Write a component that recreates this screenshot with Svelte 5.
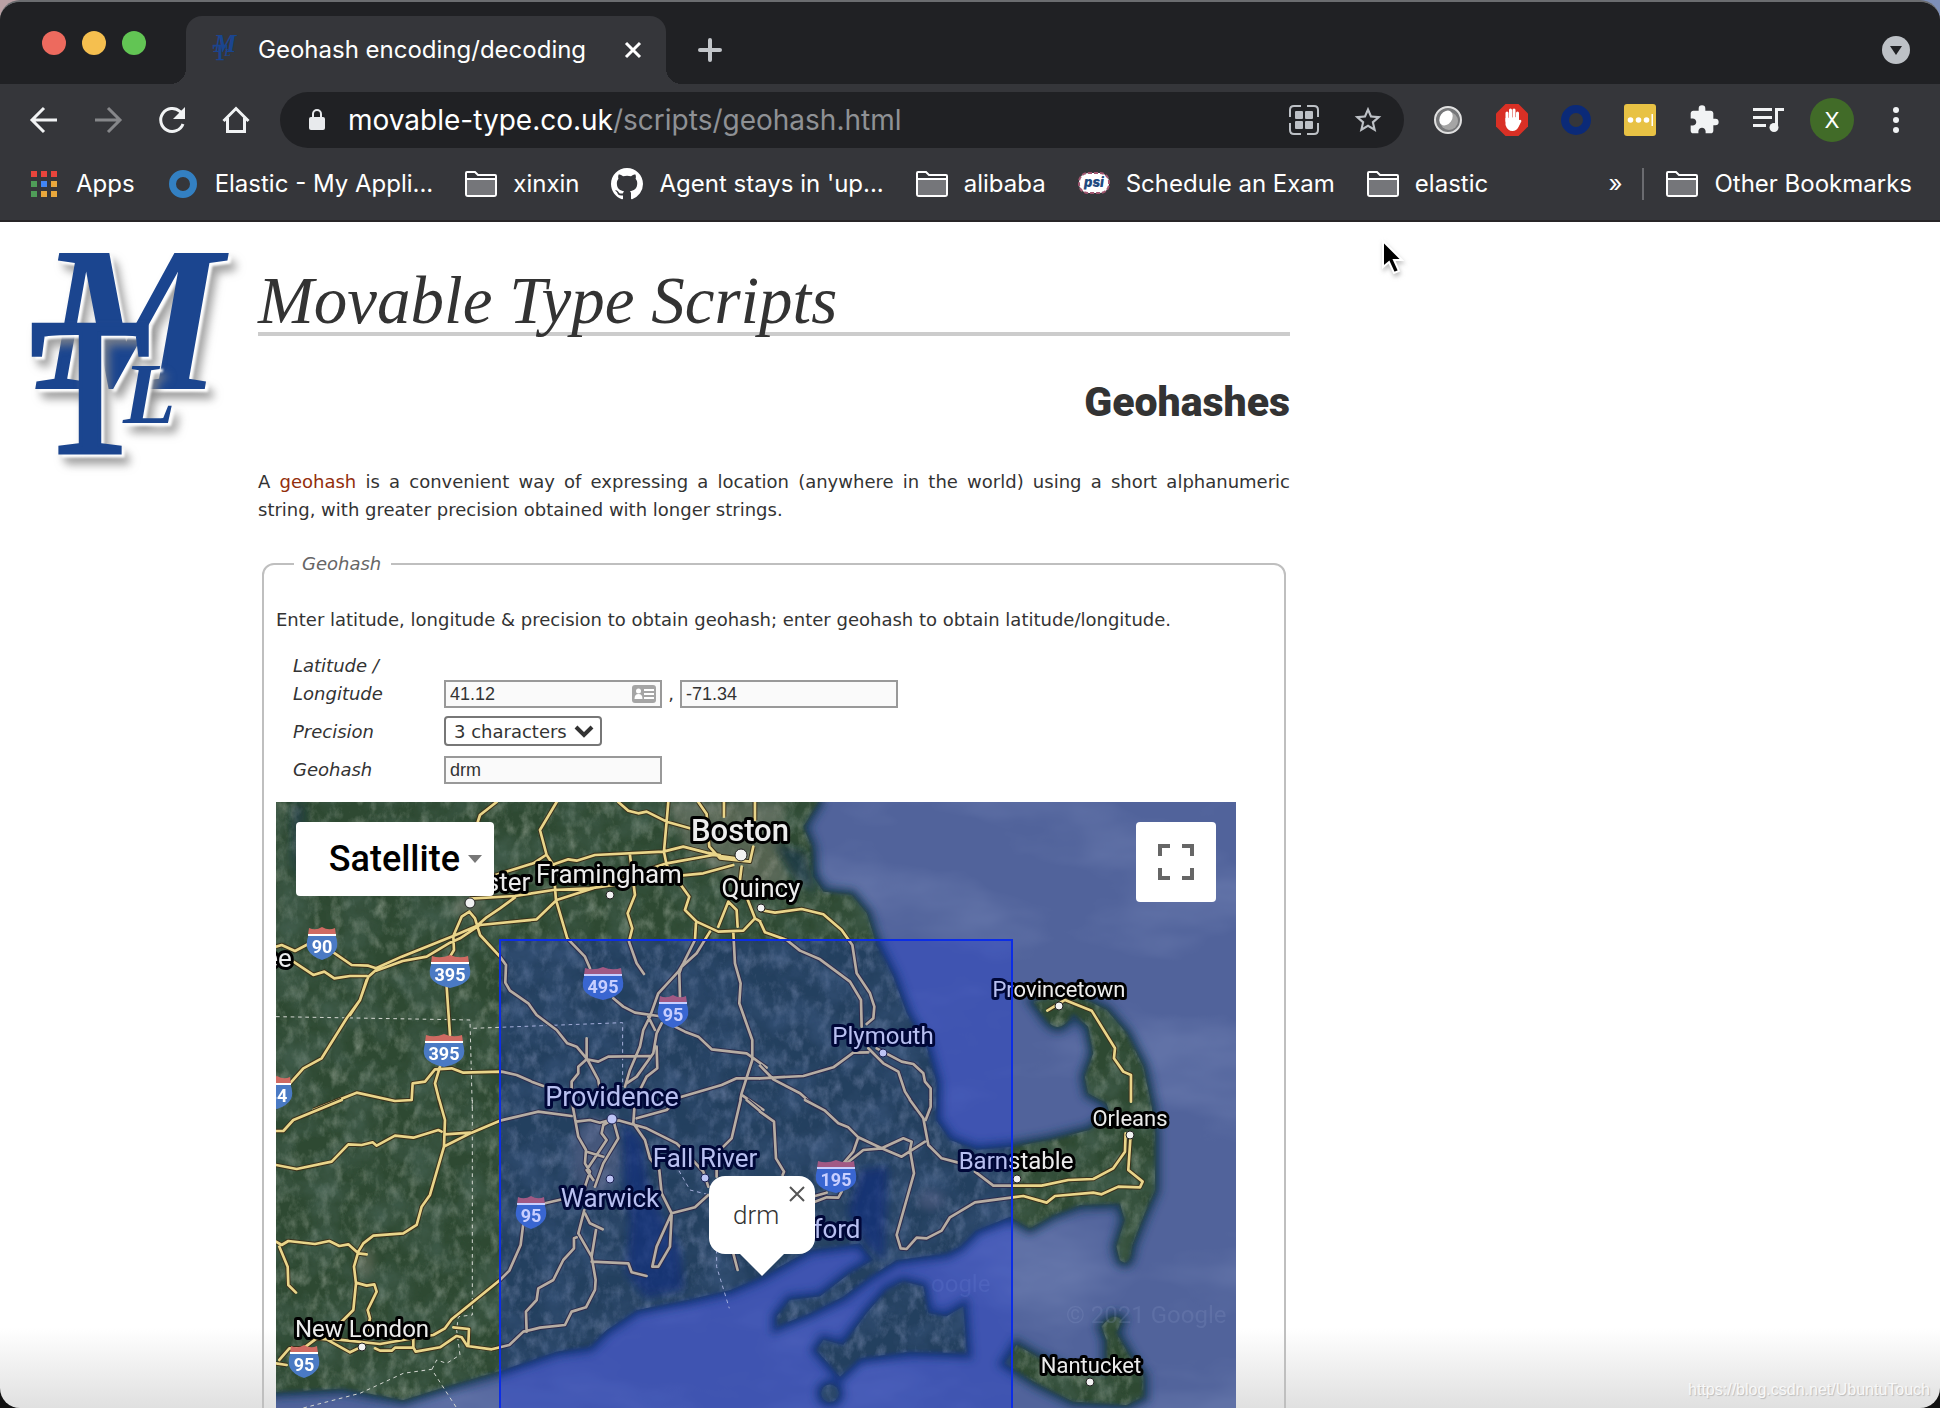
<script lang="ts">
	let latitude = $state('41.12');
	let longitude = $state('-71.34');
	let precision = $state('3');
	let geohash = $state('drm');
	let showInfo = $state(true);

	const cities = [
		{ name: 'Boston', x: 464, y: 39, size: 31, weight: 500, dot: [465, 53, 6] },
		{ name: 'Framingham', x: 333, y: 81, size: 26, dot: [334, 93, 4] },
		{ name: 'Quincy', x: 485, y: 95, size: 26, dot: [485, 106, 4] },
		{ name: 'ster', x: 232, y: 89, size: 26, dot: [194, 101, 5] },
		{ name: 'ee', x: 2, y: 165, size: 26 },
		{ name: 'Provincetown', x: 783, y: 195, size: 22, dot: [783, 204, 4] },
		{ name: 'Plymouth', x: 607, y: 242, size: 24, dot: [607, 251, 4] },
		{ name: 'Providence', x: 336, y: 304, size: 27, dot: [336, 317, 5] },
		{ name: 'Fall River', x: 429, y: 365, size: 26, dot: [429, 376, 4] },
		{ name: 'Warwick', x: 334, y: 405, size: 26, dot: [334, 377, 4] },
		{ name: 'Orleans', x: 854, y: 324, size: 22, dot: [854, 333, 4] },
		{ name: 'Barnstable', x: 740, y: 367, size: 24, dot: [741, 377, 4] },
		{ name: 'ford', x: 561, y: 436, size: 26 },
		{ name: 'New London', x: 86, y: 535, size: 24, dot: [86, 545, 4] },
		{ name: 'Nantucket', x: 815, y: 571, size: 22, dot: [814, 580, 4] }
	];

	const shields = [
		{ no: '90', x: 46, y: 142, w: 15 },
		{ no: '395', x: 174, y: 170, w: 20 },
		{ no: '395', x: 168, y: 249, w: 20 },
		{ no: '84', x: 1, y: 291, w: 15 },
		{ no: '495', x: 327, y: 182, w: 20 },
		{ no: '95', x: 397, y: 210, w: 15 },
		{ no: '95', x: 255, y: 411, w: 15 },
		{ no: '195', x: 560, y: 375, w: 20 },
		{ no: '95', x: 28, y: 560, w: 15 }
	];

	// each tile keeps its own 3x grid
	const tiles = [
		{
			x: -6,
			y: -2,
			roads:
				'M18 440L35 435 75 453 115 432M190 457L245 495 295 497 318 505M70 485L130 525 163 515 193 535 240 528 290 528M318 505L395 470 550 408 620 378 650 352 690 325 735 292M318 512L398 483 470 470 540 428 570 415 630 375 800 358 860 300 1000 255 1190 190 1330 165 1400 175M318 510L295 530 270 600 230 655 155 775 100 805 60 850M290 540L270 600 240 645M600 296L735 288 850 270 960 265 1200 230 1300 220 1390 195M660 230L790 190 828 165M845 195L895 178 920 182 975 165 1180 155 1240 140 1310 158 1350 165M598 335L575 350 550 408 552 450 540 470M598 335L615 355 630 405 690 470 708 495 706 548 720 572 775 610 800 645 860 690 892 730 920 740 952 778 985 840 990 870M680 6L630 45 622 70M860 6L810 90 830 165 850 195 858 300 892 415 945 470 960 505M1030 595L1060 620 1095 638 1165 648M1080 165L1095 285 1073 340 1087 385 1077 425 1100 490 1122 522M1045 6L1075 32 1105 40 1130 35 1190 65 1260 85M1195 6L1190 65 1182 155 1190 195 1258 290 1245 330 1280 365 1345 395 1420 392 1455 355 1410 240 1415 200M1285 6L1310 42 1318 140 1350 175 1440 185 1450 140M1362 6V50M1455 6V60M1345 380L1375 305 1400 330 1403 380M1278 370L1275 420 1240 490 1225 515 1165 580 1140 650 1120 690 1110 740 1080 810 1065 860M1320 395L1280 460 1235 500 1228 520 1230 590M1390 395L1395 490 1412 550 1408 610 1447 720 1447 780 1415 880 1405 930M1135 650L1155 690M1175 670L1160 700 1150 760 1100 830 1070 850M1160 740L1162 805 1130 830 1110 870M1215 680L1245 695 1285 710 1325 748 1430 760 1490 803M950 715V778L985 785 1015 770 1140 768M950 778L925 800 925 820 905 845 905 910M530 560L540 705M510 800L495 850 515 930M130 930L260 878 375 903 425 900 428 850 465 845 495 808 545 805 580 818 695 815 740 825 785 845 820 858M1230 892L1355 855 1400 835 1472 835M1415 885L1480 930M1455 355L1472 365',
			borders: 'M18 650L600 660 607 930M610 685L1058 668V860'
		},
		{
			x: 484,
			y: -2,
			roads:
				'M0 330L45 338 125 327 190 343 245 390 277 435 290 520 330 580 343 620 340 655 320 672M0 365L15 397 80 420 120 452 180 478 270 545 303 600 305 680M0 835L130 828 220 802 280 758 325 757M325 745L370 790 415 815 435 875 470 930M350 745L425 785 460 792 490 820 495 845 512 865 512 905M0 797L40 838 120 880 160 915 195 932M862 632L915 600 995 632 1065 745 1062 775 1090 815 1113 825 1113 905',
			borders: ''
		},
		{
			x: -6,
			y: 298,
			roads:
				'M18 93L40 93 70 60 215 0M18 195L80 207 185 185 235 133 275 135 308 127 320 137 375 107 430 113 505 90 515 95M508 0L525 60 522 140 480 285 455 320 440 375 400 400 310 407 280 430 265 455 252 500 258 550 250 630 190 690M525 103L600 98M525 138L605 98 690 62 805 35 905 48M18 425L35 435 55 423 135 432 178 423 208 438 235 433 265 460 290 463M28 440L53 500 55 555 78 578M258 548L290 557 313 553 320 575 293 630 300 655 290 700M18 790L50 795M28 780L58 745 100 745 140 715 170 718 240 757 275 740M170 715L330 732 430 715 490 705 525 685 545 658 690 540 718 512 752 435 760 370M315 745L330 752 365 752 375 743 430 742 437 755 510 742 560 708 575 712 592 738 665 748 718 735 760 695 810 683 885 675 905 635 948 622 975 570 977 540 965 470 925 400 943 330M550 682L597 687 595 735M430 715V742M825 310L890 295M770 695L768 635 800 600 805 565 850 540 880 480 912 445 912 415 920 412M965 485L1075 490 1085 517 1130 528M965 470L978 390M945 340L960 370 998 388M905 0L925 110 948 150 945 190 960 215 945 260 935 300M1025 60L1000 75 995 100 1010 120 950 210 970 240M1030 60L1045 115 1000 190 975 260M950 155L1000 170M918 65L960 60 990 68 1020 60 1050 62 1130 85 1220 130 1240 150 1300 215 1315 260M1095 0L1090 70 1125 120 1140 175 1168 210 1175 280 1205 340 1275 322 1315 285M1205 340L1160 440 1147 500 1165 500 1200 440 1205 345M1100 55L1190 30 1230 -8M1412 0L1385 115 1340 160 1340 230M1430 0L1470 33M1390 460L1403 510',
			borders:
				'M607 0V645L565 650 560 690 570 765 530 790 500 780 485 810M100 924L270 880 400 820 485 808 560 924M1095 70L1130 130 1220 200 1260 270 1340 290 1340 500 1378 625'
		},
		{
			x: 484,
			y: 298,
			roads:
				'M0 35L42 65 48 175 72 215 68 225M135 0L195 32 235 70 265 82 295 112 365 145 430 115 455 125 450 150 462 220 410 405 422 445 440 447 470 413 500 415 545 392 570 352 645 307 758 292 790 288 860 308 885 288 1000 278 1025 283 1075 260 1140 262 1148 245 1105 210 1112 105M295 112L280 155 250 190M260 190L310 150 365 145 425 170 495 125M450 0L490 55 505 135 545 175 595 188M512 0V20L497 60M645 215L700 257 845 257 925 240 1000 237 1060 205 1095 155 1097 100M165 288L200 278M165 305L200 292 235 293 245 275',
			borders: ''
		}
	];

	const appColors = ['#e8453c', '#e8453c', '#e8453c', '#4f9d58', '#4285f4', '#e8a73c', '#4f9d58', '#e8a73c', '#e8a73c'];
</script>

{#snippet folder()}
	<svg class="icon32" viewBox="0 0 32 28" fill="none" stroke="#fff" stroke-width="2">
		<path d="M1 24V3q0-1 1-1h8l3 3h17q1 0 1 1v18q0 2-2 2H3q-2 0-2-2z" />
		<path d="M2 10h28v15H2z" fill="#75767a" stroke="none" />
		<path d="M1 9h30" />
	</svg>
{/snippet}

{#snippet monogram()}
	<text x="20" y="147" font-size="208" font-style="italic" font-weight="bold">M</text>
	<text x="72" y="211" font-size="196" text-anchor="middle" stroke="#1b458f" stroke-width="4">T</text>
	<text x="105" y="181" font-size="86" font-style="italic" font-weight="bold">L</text>
{/snippet}

<div class="window">
	<header class="chrome">
		<div class="strip">
			<div class="lights">
				<span class="red"></span>
				<span class="yellow"></span>
				<span class="green"></span>
			</div>
			<div class="tab">
				<svg class="favicon" viewBox="0 0 240 262" aria-hidden="true">
					{@render monogram()}
				</svg>
				<span class="tabTitle">Geohash encoding/decoding</span>
				<button class="plain" aria-label="Close tab">
					<svg width="18" height="18" viewBox="0 0 18 18" stroke="#fff" stroke-width="3"><path d="M2 2l14 14M16 2L2 16" /></svg>
				</button>
			</div>
			<button class="plain newTab" aria-label="New tab">
				<svg width="24" height="24" viewBox="0 0 24 24" stroke="#c3c6ca" stroke-width="4" stroke-linecap="round"><path d="M12 2v20M2 12h20" /></svg>
			</button>
			<button class="plain search" aria-label="Search tabs">
				<svg width="28" height="28" viewBox="0 0 28 28"><circle cx="14" cy="14" r="14" fill="#bdc1c6" /><path d="M8 10h12l-6 9z" fill="#202124" /></svg>
			</button>
		</div>

		<div class="toolbar">
			<div class="nav">
				<button class="plain" aria-label="Back">
					<svg viewBox="0 0 32 32" fill="none" stroke="#f1f3f4" stroke-width="3"><path d="M29 16H5M16 4L4 16l12 12" /></svg>
				</button>
				<button class="plain" aria-label="Forward">
					<svg viewBox="0 0 32 32" fill="none" stroke="#86878a" stroke-width="3"><path d="M3 16h24M16 4l12 12-12 12" /></svg>
				</button>
				<button class="plain" aria-label="Reload">
					<svg viewBox="0 0 32 32" fill="none" stroke="#f1f3f4" stroke-width="3"><path d="M27 20A11.500 11.500 0 1 1 24 7.500L27 10" /><path d="M29 3v12H17z" fill="#f1f3f4" stroke="none" /></svg>
				</button>
				<button class="plain" aria-label="Home">
					<svg viewBox="0 0 32 32" fill="none" stroke="#f1f3f4" stroke-width="3"><path d="M3.500 17L16 4.500 28.500 17M7.500 14v13.500h17V14" /></svg>
				</button>
			</div>
			<div class="omnibox">
				<svg width="18" height="24" viewBox="0 0 18 24"><rect x="1" y="9" width="16" height="13" rx="2" fill="#e8eaed" /><path d="M5 10V6a4 4 0 0 1 8 0v4" fill="none" stroke="#e8eaed" stroke-width="2" /></svg>
				<span class="url">movable-type.co.uk<span>/scripts/geohash.html</span></span>
				<button class="plain" aria-label="QR code">
					<svg width="32" height="32" viewBox="0 0 32 32" fill="none" stroke="#bdc1c6" stroke-width="2"><path d="M2 13V6q0-4 4-4h7M19 2h7q4 0 4 4v7M30 19v7q0 4-4 4h-7M13 30H6q-4 0-4-4v-7" /><g fill="#bdc1c6" stroke="none"><rect x="7" y="7" width="8" height="8" rx="1" /><rect x="17" y="7" width="8" height="8" rx="1" /><rect x="7" y="17" width="8" height="8" rx="1" /><rect x="17" y="17" width="8" height="8" rx="1" /></g></svg>
				</button>
				<button class="plain" aria-label="Bookmark this page">
					<svg width="32" height="32" viewBox="0 0 24 24" fill="#bdc1c6"><path d="M22 9.240l-7.190-.62L12 2 9.190 8.630 2 9.240l5.460 4.730L5.820 21 12 17.270 18.180 21l-1.630-7.030L22 9.240zM12 15.400l-3.760 2.270 1-4.280-3.320-2.880 4.380-.38L12 6.100l1.710 4.040 4.380.38-3.320 2.880 1 4.280L12 15.400z" /></svg>
				</button>
			</div>
			<div class="extensions">
				<svg viewBox="0 0 32 32"><circle cx="16" cy="16" r="13" fill="#77787a" stroke="#e0e0e0" stroke-width="2" /><circle cx="17" cy="17" r="9" fill="#a5a5a5" /><ellipse cx="14" cy="14" rx="6" ry="8" fill="#fff" transform="rotate(35 14 14)" /></svg>
				<svg viewBox="0 0 32 32"><path d="M9.500 0h13L32 9.500v13L22.500 32h-13L0 22.500v-13z" fill="#d93025" /><g stroke="#fff" stroke-width="3" stroke-linecap="round"><path d="M11 17V9M14.500 15V6M18 15V6M21.500 17V9" /></g><path d="M9.500 14v7q2 6 7 6 4 0 6-4l3-6q-1-2-3-.5l-1 1V13z" fill="#fff" /></svg>
				<svg viewBox="0 0 32 32"><circle cx="16" cy="16" r="11" fill="none" stroke="#0b2a78" stroke-width="8" /></svg>
				<svg viewBox="0 0 32 32"><rect width="32" height="32" rx="3" fill="#e8c244" /><g fill="#fff"><circle cx="6.500" cy="16" r="2.800" /><circle cx="14.500" cy="16" r="2.800" /><circle cx="22.500" cy="16" r="2.800" /><rect x="27.500" y="10" width="1.500" height="12" /></g></svg>
				<svg viewBox="0 0 24 24" fill="#f1f3f4"><path d="M20.500 11H19V7c0-1.100-.9-2-2-2h-4V3.500a2.500 2.500 0 0 0-5 0V5H4c-1.100 0-1.990.9-1.990 2v3.800H3.500c1.490 0 2.700 1.210 2.700 2.700s-1.210 2.700-2.700 2.700H2V20c0 1.100.9 2 2 2h3.800v-1.500c0-1.490 1.210-2.700 2.700-2.700s2.700 1.210 2.700 2.700V22H17c1.100 0 2-.9 2-2v-4h1.500a2.500 2.500 0 0 0 0-5z" /></svg>
				<svg viewBox="0 0 32 32" fill="none" stroke="#f1f3f4" stroke-width="3"><path d="M1 5.500h19M1 13.500h19M1 21.500h13M24.500 23V5.500H32" /><circle cx="22" cy="23.500" r="4.500" fill="#f1f3f4" stroke="none" /></svg>
				<span class="avatar">X</span>
				<svg viewBox="0 0 32 32" fill="#f1f3f4"><circle cx="16" cy="6" r="3" /><circle cx="16" cy="16" r="3" /><circle cx="16" cy="26" r="3" /></svg>
			</div>
		</div>

		<nav class="bookmarks">
			<a href="#apps">
				<svg class="apps" viewBox="0 0 26 26">
					{#each appColors as color, i}
						<rect x={(i % 3) * 10} y={Math.floor(i / 3) * 10} width="6" height="6" fill={color} />
					{/each}
				</svg>
				Apps
			</a>
			<a href="#elastic-app">
				<svg class="icon28" viewBox="0 0 28 28"><circle cx="14" cy="14" r="10.500" fill="none" stroke="#3380c2" stroke-width="7" /></svg>
				Elastic - My Appli...
			</a>
			<a href="#xinxin">{@render folder()} xinxin</a>
			<a href="#agent">
				<svg class="icon32" viewBox="0 0 16 16" fill="#fff"><path d="M8 0C3.580 0 0 3.580 0 8c0 3.540 2.290 6.530 5.470 7.590.4.070.55-.17.55-.38 0-.19-.01-.82-.01-1.490-2.010.37-2.530-.49-2.690-.94-.09-.23-.48-.94-.82-1.130-.28-.15-.68-.52-.01-.53.63-.01 1.080.58 1.230.82.72 1.210 1.870.87 2.330.66.07-.52.28-.87.51-1.070-1.780-.2-3.640-.89-3.640-3.950 0-.87.31-1.590.82-2.150-.08-.2-.36-1.020.08-2.120 0 0 .67-.21 2.200.82.64-.18 1.320-.27 2-.27s1.360.09 2 .27c1.530-1.040 2.200-.82 2.200-.82.44 1.100.16 1.920.08 2.120.51.56.82 1.270.82 2.150 0 3.070-1.870 3.750-3.650 3.950.29.25.54.73.54 1.480 0 1.070-.01 1.930-.01 2.200 0 .21.15.46.55.38A8.010 8.010 0 0 0 16 8c0-4.420-3.580-8-8-8z" /></svg>
				Agent stays in 'up...
			</a>
			<a href="#alibaba">{@render folder()} alibaba</a>
			<a href="#exam">
				<svg class="icon32" viewBox="0 0 32 28">
					<rect x="1" y="3" width="30" height="20" rx="9" fill="#fff" stroke="#a0566f" stroke-width="2" stroke-dasharray="4 2" />
					<text x="16" y="17" text-anchor="middle" font-size="13" font-weight="900" font-style="italic" fill="#1f4a80">psi</text>
				</svg>
				Schedule an Exam
			</a>
			<a href="#elastic">{@render folder()} elastic</a>
			<span class="more">»</span>
			<a class="other" href="#other">{@render folder()} Other Bookmarks</a>
		</nav>
	</header>

	<main>
		<svg class="logo" viewBox="0 0 240 262" role="img" aria-label="Movable Type logo">
			{@render monogram()}
		</svg>

		<div class="content">
			<h1>Movable Type Scripts</h1>
			<h2>Geohashes</h2>
			<p class="intro">
				A <a href="#geohash">geohash</a> is a convenient way of expressing a location (anywhere in the world) using a short alphanumeric string, with greater precision obtained with
				longer strings.
			</p>

			<fieldset>
				<legend>Geohash</legend>
				<p>Enter latitude, longitude &amp; precision to obtain geohash; enter geohash to obtain latitude/longitude.</p>
				<div class="rows">
					<div class="row">
						<label for="lat">Latitude / Longitude</label>
						<span class="field">
							<input id="lat" bind:value={latitude} />
							<svg class="card" viewBox="0 0 24 18"><rect width="24" height="18" rx="3" fill="#a5a5a5" /><g fill="#fff"><circle cx="6.500" cy="6" r="2.500" /><path d="M2.500 14q0-5 4-5t4 5z" /><path d="M12 4h10v2H12zM12 8h10v2H12zM12 12h10v2H12z" /></g></svg>
						</span>
						<span class="comma">,</span>
						<input aria-label="Longitude" bind:value={longitude} />
					</div>
					<div class="row">
						<label for="precision">Precision</label>
						<span class="field">
							<select id="precision" bind:value={precision}>
								<option value="3">3 characters</option>
							</select>
							<svg class="chevron" viewBox="0 0 20 14" fill="none" stroke="#333" stroke-width="4"><path d="M2 2l8 8 8-8" /></svg>
						</span>
					</div>
					<div class="row">
						<label for="hash">Geohash</label>
						<input id="hash" bind:value={geohash} />
					</div>
				</div>

				<div class="map">
					<svg viewBox="0 0 960 800" role="img" aria-label="Satellite map of south-east New England">
						<defs>
							<filter id="terrain" x="0" y="0" width="100%" height="100%">
								<feTurbulence type="fractalNoise" baseFrequency="0.09 0.06" numOctaves="5" seed="8" />
								<feColorMatrix values="0 0 0 0 0.5  0 0 0 0 0.56  0 0 0 0 0.48  0.900 0 0 0 -0.400" />
								<feComposite in2="SourceAlpha" operator="in" />
							</filter>
							<filter id="shade" x="0" y="0" width="100%" height="100%">
								<feTurbulence type="fractalNoise" baseFrequency="0.03" numOctaves="5" seed="3" />
								<feColorMatrix values="0 0 0 0 0.08  0 0 0 0 0.15  0 0 0 0 0.12  0 1 0 0 -0.350" />
								<feComposite in2="SourceAlpha" operator="in" />
							</filter>
							<filter id="sea" x="0" y="0" width="100%" height="100%">
								<feTurbulence type="fractalNoise" baseFrequency="0.006 0.014" numOctaves="4" seed="5" />
								<feColorMatrix values="0 0 0 0 0.2  0 0 0 0 0.26  0 0 0 0 0.5  0 0 1 0 -0.450" />
							</filter>
							<filter id="soft" x="-10%" y="-10%" width="120%" height="120%"><feGaussianBlur stdDeviation="4" /></filter>
							<filter id="edge" x="-10%" y="-10%" width="120%" height="120%"><feGaussianBlur stdDeviation="2" /></filter>
							<g id="land" transform="scale(0.3333)">
								<path
									d="M-60-60H1627V0L1582 74 1607 134 1612 224 1642 269 1727 279 1772 334 1797 414 1852 524 1892 634 1952 734 1982 844 1980 954 2022 1014 2102 1044 2212 1034 2322 1014 2442 984 2502 934 2492 904 2437 874 2427 824 2452 754 2437 674 2392 634Q2352 704 2312 654L2272 599 2332 584 2412 584 2492 624 2552 694 2602 794 2627 914 2637 994 2637 1164 2602 1244 2567 1334Q2562 1400 2532 1374L2522 1334 2547 1254 2532 1204 2412 1209 2332 1239 2262 1279 2202 1244 2102 1284 2052 1334 2012 1354 1862 1374 1782 1424 1702 1484 1602 1534 1502 1574 1502 1544 1542 1494 1632 1484 1722 1414 1792 1374 1752 1324 1602 1344 1512 1394 1457 1424 1362 1464 1232 1494 1082 1524 992 1584 942 1634 842 1649 682 1704 542 1744 382 1794 200 1760 -60 1774z"
								/>
								<path d="M1882 1439L1942 1454 1957 1534 2012 1544 2062 1514 2072 1654 1902 1649 1752 1669 1692 1724 1622 1644 1642 1614 1702 1629 1772 1534 1832 1464z" />
								<path d="M2222 1629L2282 1664 2372 1704 2492 1724 2492 1614 2477 1574Q2512 1530 2537 1554L2522 1594 2562 1664 2602 1724 2602 1784 2552 1809 2392 1799 2282 1744 2187 1684z" />
								<circle cx="1662" cy="1774" r="26" />
							</g>
						</defs>
						<rect width="960" height="800" fill="#51639b" />
						<rect width="960" height="800" filter="url(#sea)" />
						<use href="#land" fill="#1d3d52" stroke="#1d3d5c" stroke-width="34" filter="url(#soft)" />
						<use href="#land" fill="#2f4830" filter="url(#edge)" />
						<use href="#land" filter="url(#terrain)" />
						<use href="#land" filter="url(#shade)" />
						<g fill="#12305a" filter="url(#soft)" opacity=".65">
							<path d="M346 318L366 338 372 380 384 410 404 448 408 488 370 496 350 470 354 420 348 380z" />
							<path d="M584 368L612 364 608 460 588 440 572 410z" />
							<path d="M15 2h14l-4 80-8-20z" opacity=".6" />
							<path d="M496 40l34 10 10 40-20-12z" opacity=".7" />
						</g>
						<g fill="#9b9388" filter="url(#soft)" opacity=".35">
							<path d="M390 0h120l-8 50 10 30-40 10-60-40z" />
							<ellipse cx="320" cy="355" rx="24" ry="40" />
							<ellipse cx="192" cy="105" rx="14" ry="10" />
							<ellipse cx="655" cy="398" rx="14" ry="10" />
							<ellipse cx="90" cy="460" rx="8" ry="16" />
						</g>

						{#each tiles as tile}
							<g transform="translate({tile.x} {tile.y}) scale(0.3333)" fill="none" stroke-linejoin="round">
								<path d={tile.borders} stroke="#d5d8d2" stroke-width="3" stroke-dasharray="11 11" />
								<path d={tile.roads} stroke="#3b311b" stroke-width="14" />
								<path d={tile.roads} stroke="#e9d58a" stroke-width="8" stroke-linecap="round" />
							</g>
						{/each}

						{#each shields as s}
							<g transform="translate({s.x} {s.y})">
								<path d="M{-s.w + 2}-10Q{-s.w - 2} 0 {-s.w + 1} 6 {-s.w + 5} 13 0 16 {s.w - 5} 13 {s.w - 1} 6 {s.w + 2} 0 {s.w - 2}-10z" fill="#4a7ac4" />
								<path d="M{-s.w + 1}-9l1-7q{s.w / 2 - 1} 3 {s.w - 2}-1 {s.w / 2 - 1} 4 {s.w - 2} 1l1 7z" fill="#cf6a62" />
								<path d="M{-s.w + 1}-10h{s.w * 2 - 2}v2H{-s.w + 1}z" fill="#fff" />
								<text y="9" class="shield">{s.no}</text>
							</g>
						{/each}

						{#each cities as city}
							{#if city.dot}
								<circle cx={city.dot[0]} cy={city.dot[1]} r={city.dot[2]} fill="#f2f2f2" stroke="#222" stroke-width="1" />
							{/if}
							<text class="city" x={city.x} y={city.y} font-size={city.size} font-weight={city.weight ?? 400}>{city.name}</text>
						{/each}
						<text class="faint" x="655" y="490">oogle</text>
						<text class="faint" x="790" y="521">© 2021 Google</text>

						<rect x="224" y="138" width="512" height="700" fill="#0020ff" fill-opacity=".22" stroke="#0c2de6" stroke-width="2" />
					</svg>

					<button class="mapType">Satellite <span></span></button>
					<button class="fullscreen" aria-label="Toggle fullscreen view">
						<svg width="36" height="36" viewBox="0 0 36 36" fill="none" stroke="#666" stroke-width="4"><path d="M2 12V2h10M24 2h10v10M34 24v10H24M12 34H2V24" /></svg>
					</button>
					{#if showInfo}
						<div class="info">
							drm
							<button class="plain" aria-label="Close" onclick={() => (showInfo = false)}>
								<svg width="16" height="16" viewBox="0 0 16 16" stroke="#555" stroke-width="2"><path d="M1 1l14 14M15 1L1 15" /></svg>
							</button>
						</div>
					{/if}
				</div>
			</fieldset>
		</div>
	</main>

	<svg class="cursor" viewBox="0 0 24 36"><path d="M3 2v26l6-5 5 11 5-2-5-11h8z" stroke="#fff" stroke-width="2" /></svg>
	<span class="watermark">https://blog.csdn.net/UbuntuTouch</span>
</div>

<style>
	:global(body) {
		background: linear-gradient(#0000 50%, #111 50%), linear-gradient(90deg, #b9a0a4, #7d8fb8);
	}

	.window {
		position: relative;
		box-sizing: border-box;
		height: 100vh;
		overflow: hidden;
		border-top: 2px solid #6b6d70;
		border-radius: 20px;
		background: linear-gradient(#fff, #fff calc(100% - 80px), #e0e0e0);
		color: #333;
		font: 18px/28px 'DejaVu Sans', sans-serif;
	}

	.chrome {
		border-bottom: 2px solid #282527;
		background: #35363a;
		color: #fff;
		font: 24px/32px Inter, sans-serif;
	}

	.plain {
		display: flex;
		padding: 0;
		border: 0;
		background: none;
	}

	.strip {
		display: flex;
		align-items: center;
		height: 82px;
		padding: 0 30px 0 42px;
		background: #202124;
	}

	.lights {
		display: flex;
		gap: 16px;
		width: 144px;
	}

	.lights span {
		width: 24px;
		height: 24px;
		border-radius: 50%;
	}

	.red {
		background: #ed6a5e;
	}

	.yellow {
		background: #f5bf4f;
	}

	.green {
		background: #62c554;
	}

	.tab {
		position: relative;
		display: flex;
		align-items: center;
		box-sizing: border-box;
		align-self: flex-end;
		width: 480px;
		height: 68px;
		padding: 0 24px;
		border-radius: 16px 16px 0 0;
		background: #35363a;
	}

	.tab::before,
	.tab::after {
		content: '';
		position: absolute;
		bottom: 0;
		left: -16px;
		width: 16px;
		height: 16px;
		background: radial-gradient(circle at 0 0, #0000 16px, #35363a 16px);
	}

	.tab::after {
		left: 100%;
		background: radial-gradient(circle at 100% 0, #0000 16px, #35363a 16px);
	}

	.favicon {
		width: 32px;
		height: 32px;
		margin-right: 16px;
		overflow: visible;
	}

	.favicon text,
	.logo text {
		font-family: 'Liberation Serif', serif;
		fill: #1b458f;
	}

	.tabTitle {
		flex: 1;
		white-space: nowrap;
	}

	.newTab {
		margin: 14px 0 0 32px;
	}

	.search {
		margin: 14px 0 0 auto;
	}

	.toolbar {
		display: flex;
		align-items: center;
		gap: 28px;
		height: 72px;
		padding: 0 28px;
	}

	.nav {
		display: flex;
		gap: 32px;
	}

	.nav svg,
	.extensions svg {
		width: 32px;
		height: 32px;
	}

	.omnibox {
		display: flex;
		flex: 1;
		align-items: center;
		gap: 32px;
		height: 56px;
		padding: 0 20px 0 28px;
		border-radius: 28px;
		background: #202124;
	}

	.url {
		flex: 1;
		margin-left: -10px;
		font-size: 28px;
	}

	.url span {
		color: #8f9195;
	}

	.extensions {
		display: flex;
		align-items: center;
		gap: 32px;
	}

	.avatar {
		width: 44px;
		margin: 0 -6px;
		border-radius: 50%;
		background: #416b28;
		font-size: 22px;
		line-height: 44px;
		text-align: center;
	}

	.bookmarks {
		display: flex;
		align-items: center;
		gap: 32px;
		height: 56px;
		padding: 0 28px 8px;
		white-space: nowrap;
	}

	.bookmarks a {
		display: flex;
		align-items: center;
		gap: 16px;
		color: #fff;
		text-decoration: none;
	}

	.apps {
		width: 26px;
		height: 26px;
		padding: 0 3px;
	}

	.icon28 {
		width: 28px;
		padding: 0 2px;
	}

	.icon32 {
		width: 32px;
	}

	.more {
		margin-left: auto;
		margin-right: -12px;
	}

	.bookmarks .other {
		padding-left: 22px;
		border-left: 2px solid #6b6c70;
	}

	main {
		display: flex;
	}

	.logo {
		flex: none;
		width: 240px;
		height: 262px;
		margin: 20px 0 0 18px;
		overflow: visible;
	}

	.logo text {
		filter: drop-shadow(3px 3px 1px #fff) drop-shadow(5px 7px 4px #888c);
	}

	.content {
		flex: 1;
		min-width: 0;
		max-width: 1032px;
	}

	h1 {
		margin: 46px 0 0;
		border-bottom: 4px solid #ccc;
		font: italic 67px/64px 'Liberation Serif', serif;
	}

	h2 {
		margin: 40px 0 0;
		font: 900 41px/52px Roboto, sans-serif;
		text-align: right;
	}

	.intro {
		margin: 40px 0 26px;
		text-align: justify;
	}

	.intro a {
		color: #932e0c;
		text-decoration: none;
	}

	fieldset {
		margin: 0 4px;
		padding: 28px 12px;
		border: 2px solid #bfbfbf;
		border-radius: 12px;
	}

	legend {
		margin-left: 18px;
		padding: 0 10px 0 8px;
		color: #666;
		font-style: italic;
	}

	fieldset p {
		margin: 0;
	}

	.rows {
		display: flex;
		flex-direction: column;
		gap: 8px;
		margin: 18px 0 18px 17px;
	}

	.row {
		display: flex;
		align-items: flex-end;
		min-height: 30px;
	}

	.row label {
		width: 119px;
		margin-right: 32px;
		font-style: italic;
	}

	.field {
		position: relative;
		display: flex;
	}

	input {
		box-sizing: border-box;
		width: 218px;
		height: 28px;
		padding: 0 4px;
		border: 2px solid #999;
		background: #fafafa;
		color: #333;
		font: 18px 'Liberation Sans', sans-serif;
	}

	.card {
		position: absolute;
		top: 5px;
		right: 6px;
		width: 24px;
	}

	.comma {
		width: 18px;
		text-align: center;
	}

	select {
		width: 158px;
		height: 30px;
		padding: 0 8px;
		border: 2px solid #777;
		border-radius: 4px;
		appearance: none;
		background: #fff;
		color: #333;
		font: 18px 'DejaVu Sans', sans-serif;
	}

	.chevron {
		position: absolute;
		top: 9px;
		right: 8px;
		width: 20px;
		pointer-events: none;
	}

	.map {
		position: relative;
		max-width: 960px;
		font-family: Roboto, sans-serif;
	}

	.map > svg {
		display: block;
		width: 100%;
	}

	.city {
		fill: #ececec;
		stroke: #000;
		stroke-width: 6px;
		stroke-linejoin: round;
		paint-order: stroke;
		text-anchor: middle;
	}

	.shield {
		fill: #fff;
		font-size: 18px;
		font-weight: 700;
		text-anchor: middle;
	}

	.faint {
		fill: #8f9ecb;
		font-size: 24px;
		opacity: 0.2;
	}

	.mapType,
	.fullscreen {
		position: absolute;
		top: 20px;
		border: 0;
		border-radius: 4px;
		background: #fff;
	}

	.mapType {
		display: flex;
		align-items: center;
		justify-content: flex-end;
		gap: 8px;
		left: 20px;
		width: 198px;
		height: 74px;
		padding: 0 12px;
		color: #000;
		font: 500 36px Roboto, sans-serif;
	}

	.mapType span {
		border: 7px solid #0000;
		border-top: 8px solid #777;
		border-bottom: 0;
	}

	.fullscreen {
		display: grid;
		place-items: center;
		right: 20px;
		width: 80px;
		height: 80px;
	}

	.info {
		position: absolute;
		top: 374px;
		left: 433px;
		box-sizing: border-box;
		width: 106px;
		height: 78px;
		padding-left: 24px;
		border-radius: 16px;
		background: #fff;
		font-size: 26px;
		font-weight: 300;
		line-height: 78px;
	}

	.info::after {
		content: '';
		position: absolute;
		top: 100%;
		left: 31px;
		border: 22px solid #0000;
		border-top-color: #fff;
		border-bottom: 0;
	}

	.info .plain {
		position: absolute;
		top: 10px;
		right: 10px;
	}

	.cursor {
		position: absolute;
		top: 237px;
		left: 1380px;
		width: 24px;
		filter: drop-shadow(1px 3px 2px #8888);
	}

	.watermark {
		position: absolute;
		right: 10px;
		bottom: 4px;
		color: #f8f8f8;
		font: 16px/28px 'Liberation Sans', sans-serif;
		text-shadow: 1px 1px 1px #bbb;
	}
</style>
